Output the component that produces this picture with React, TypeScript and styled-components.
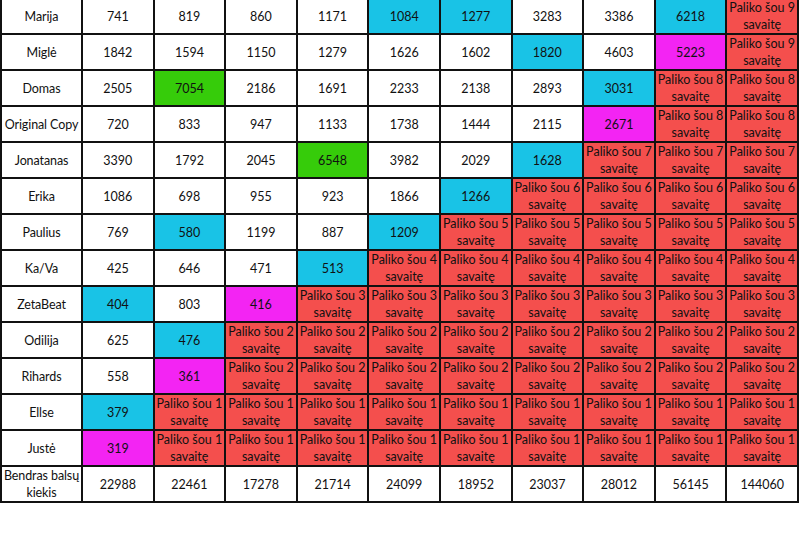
import React from "react";
import styled, { createGlobalStyle } from "styled-components";

const Global = createGlobalStyle`
  html, body { margin: 0; padding: 0; background: #ffffff; }
  body { font-family: Lato, "Open Sans", "Liberation Sans", sans-serif; overflow: hidden; }
`;

type Kind = "w" | "c" | "g" | "m" | "r";

const colors: Record<Kind, string> = {
  w: "#ffffff",
  c: "#19c3e6",
  g: "#36cc0a",
  m: "#f324f3",
  r: "#f44f4d",
};

const Page = styled.div`
  width: 800px;
  height: 533px;
  overflow: hidden;
`;

const Sheet = styled.table`
  margin-top: -3px;
  width: 799px;
  border-collapse: collapse;
  table-layout: fixed;
  font-size: 12.5px;
  color: #111;
`;

const Row = styled.tr`
  height: 36px;
`;

const Cell = styled.td<{ $kind: Kind }>`
  border: 2px solid #111;
  background: ${(p) => colors[p.$kind]};
  text-align: center;
  vertical-align: middle;
  padding: 0;
  height: 34px;
  box-sizing: border-box;
  line-height: 17px;
  white-space: nowrap;
  overflow: hidden;
`;

const NameCell = styled(Cell)`
  letter-spacing: -0.1px;
`;

type Entry = string | [string, Kind];

const left = (n: number) => `Paliko šou ${n}`;

const rows: { name: string; cells: Entry[] }[] = [
  { name: "Marija", cells: ["741", "819", "860", "1171", ["1084", "c"], ["1277", "c"], "3283", "3386", ["6218", "c"], "P9"] },
  { name: "Miglė", cells: ["1842", "1594", "1150", "1279", "1626", "1602", ["1820", "c"], "4603", ["5223", "m"], "P9"] },
  { name: "Domas", cells: ["2505", ["7054", "g"], "2186", "1691", "2233", "2138", "2893", ["3031", "c"], "P8", "P8"] },
  { name: "Original Copy", cells: ["720", "833", "947", "1133", "1738", "1444", "2115", ["2671", "m"], "P8", "P8"] },
  { name: "Jonatanas", cells: ["3390", "1792", "2045", ["6548", "g"], "3982", "2029", ["1628", "c"], "P7", "P7", "P7"] },
  { name: "Erika", cells: ["1086", "698", "955", "923", "1866", ["1266", "c"], "P6", "P6", "P6", "P6"] },
  { name: "Paulius", cells: ["769", ["580", "c"], "1199", "887", ["1209", "c"], "P5", "P5", "P5", "P5", "P5"] },
  { name: "Ka/Va", cells: ["425", "646", "471", ["513", "c"], "P4", "P4", "P4", "P4", "P4", "P4"] },
  { name: "ZetaBeat", cells: [["404", "c"], "803", ["416", "m"], "P3", "P3", "P3", "P3", "P3", "P3", "P3"] },
  { name: "Odilija", cells: ["625", ["476", "c"], "P2", "P2", "P2", "P2", "P2", "P2", "P2", "P2"] },
  { name: "Rihards", cells: ["558", ["361", "m"], "P2", "P2", "P2", "P2", "P2", "P2", "P2", "P2"] },
  { name: "Ellse", cells: [["379", "c"], "P1", "P1", "P1", "P1", "P1", "P1", "P1", "P1", "P1"] },
  { name: "Justė", cells: [["319", "m"], "P1", "P1", "P1", "P1", "P1", "P1", "P1", "P1", "P1"] },
];

const totals = ["22988", "22461", "17278", "21714", "24099", "18952", "23037", "28012", "56145", "144060"];

function renderEntry(e: Entry, i: number) {
  if (typeof e === "string" && e.startsWith("P")) {
    const n = Number(e.slice(1));
    return (
      <Cell key={i} $kind="r">
        {left(n)}
        <br />
        savaitę
      </Cell>
    );
  }
  if (typeof e === "string") {
    return (
      <Cell key={i} $kind="w">
        {e}
      </Cell>
    );
  }
  return (
    <Cell key={i} $kind={e[1]}>
      {e[0]}
    </Cell>
  );
}

export default function App() {
  return (
    <Page>
      <Global />
      <Sheet>
        <colgroup>
          <col style={{ width: 81 }} />
          {totals.map((_, i) => (
            <col key={i} />
          ))}
        </colgroup>
        <tbody>
          {rows.map((r) => (
            <Row key={r.name}>
              <NameCell $kind="w">{r.name}</NameCell>
              {r.cells.map(renderEntry)}
            </Row>
          ))}
          <Row>
            <NameCell $kind="w">
              Bendras balsų
              <br />
              kiekis
            </NameCell>
            {totals.map((t, i) => (
              <Cell key={i} $kind="w">
                {t}
              </Cell>
            ))}
          </Row>
        </tbody>
      </Sheet>
    </Page>
  );
}
